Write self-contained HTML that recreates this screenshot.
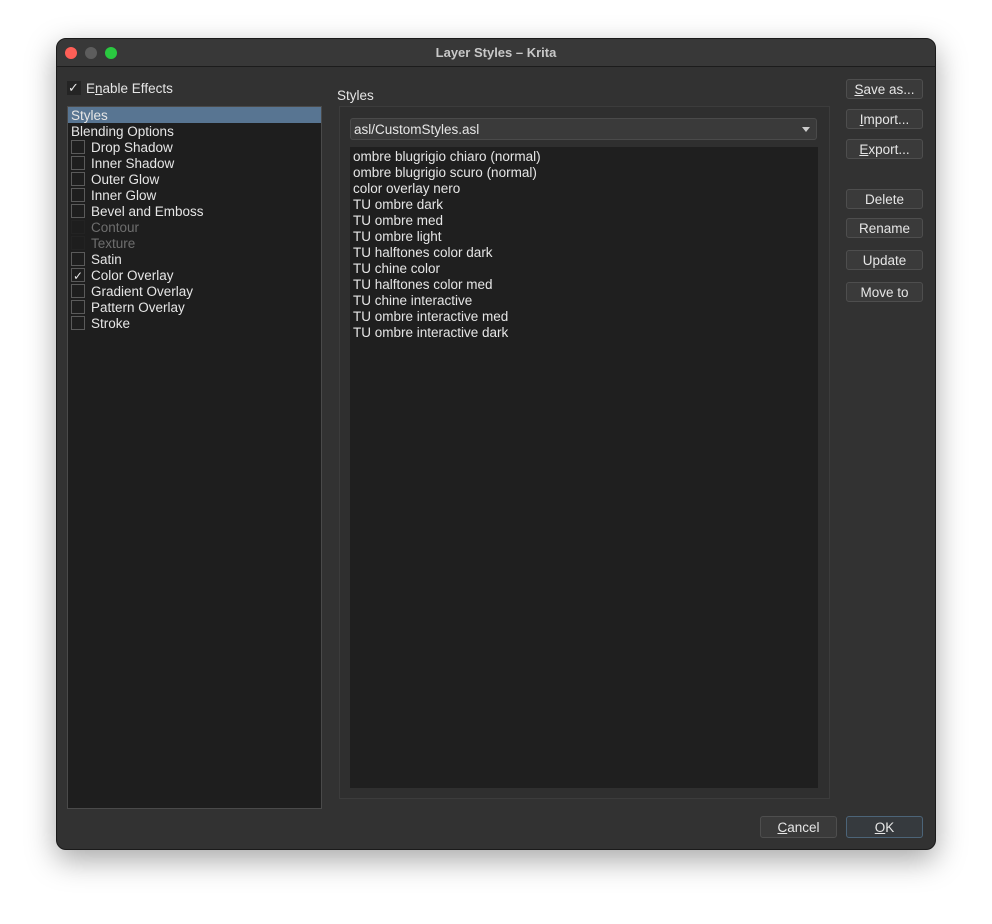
<!DOCTYPE html>
<html><head><meta charset="utf-8"><style>
*{box-sizing:border-box;margin:0;padding:0}
body{width:992px;height:924px;background:#fff;font-family:"Liberation Sans",sans-serif;font-size:13.5px;color:#e6e6e6;position:relative;overflow:hidden}
.win{position:absolute;left:56px;top:38px;width:880px;height:812px;background:#323232;border-radius:10px;box-shadow:0 10px 30px rgba(0,0,0,.35);border:1px solid #1a1a1a;overflow:hidden}
.title{position:absolute;left:0;top:0;width:100%;height:28px;background:#383838;border-bottom:1px solid #1c1c1c;text-align:center;line-height:27px;font-weight:bold;color:#c8c8c8;font-size:13px}
.dot{position:absolute;top:8px;width:12px;height:12px;border-radius:50%}
.a{position:absolute;white-space:nowrap}
.list{position:absolute;background:#1e1e1e;border:1px solid #4a4a4a}
.row{position:absolute;height:16px;line-height:18px;white-space:nowrap}
.cb{position:absolute;width:14px;height:14px;border:1px solid #5a5a5a;background:#1e1e1e;top:1px}
.btn{position:absolute;left:846px;width:77px;height:20px;background:#3a3a3a;border:1px solid #4e4e4e;border-radius:3px;text-align:center;line-height:20px;color:#e6e6e6}
u{text-decoration:underline}
</style></head><body>
<div class="win">
<div class="title">Layer Styles – Krita</div>
<div class="dot" style="left:8px;background:#fe5f57"></div>
<div class="dot" style="left:28px;background:#5d5d5d"></div>
<div class="dot" style="left:48px;background:#2ac840"></div>
</div>
<div class="cb" style="left:67px;top:81px;border:none;background:#242424"></div>
<div class="a" style="left:68px;top:80px;font-size:13px">✓</div>
<div class="a" style="left:86px;top:81px">E<u>n</u>able Effects</div>

<div class="list" style="left:67px;top:106px;width:255px;height:703px">
<div class="row" style="left:0;top:0;width:253px;background:#587592;padding-left:3px">Styles</div>
<div class="row" style="left:3px;top:16px">Blending Options</div>
<div class="cb" style="left:3px;top:33px"></div><div class="row" style="left:23px;top:32px">Drop Shadow</div>
<div class="cb" style="left:3px;top:49px"></div><div class="row" style="left:23px;top:48px">Inner Shadow</div>
<div class="cb" style="left:3px;top:65px"></div><div class="row" style="left:23px;top:64px">Outer Glow</div>
<div class="cb" style="left:3px;top:81px"></div><div class="row" style="left:23px;top:80px">Inner Glow</div>
<div class="cb" style="left:3px;top:97px"></div><div class="row" style="left:23px;top:96px">Bevel and Emboss</div>
<div class="cb" style="left:3px;top:113px;border-color:#232323"></div><div class="row" style="left:23px;top:112px;color:#6e6e6e">Contour</div>
<div class="cb" style="left:3px;top:129px;border-color:#232323"></div><div class="row" style="left:23px;top:128px;color:#6e6e6e">Texture</div>
<div class="cb" style="left:3px;top:145px"></div><div class="row" style="left:23px;top:144px">Satin</div>
<div class="cb" style="left:3px;top:161px"></div><div class="row" style="left:5px;top:160px;font-size:12px">✓</div><div class="row" style="left:23px;top:160px">Color Overlay</div>
<div class="cb" style="left:3px;top:177px"></div><div class="row" style="left:23px;top:176px">Gradient Overlay</div>
<div class="cb" style="left:3px;top:193px"></div><div class="row" style="left:23px;top:192px">Pattern Overlay</div>
<div class="cb" style="left:3px;top:209px"></div><div class="row" style="left:23px;top:208px">Stroke</div>
</div>

<div class="a" style="left:337px;top:88px">Styles</div>
<div style="position:absolute;left:339px;top:106px;width:491px;height:693px;border:1px solid #3c3c3c;background:#2f2f2f"></div>
<div style="position:absolute;left:350px;top:118px;width:467px;height:22px;background:#3a3a3a;border:1px solid #4a4a4a;border-radius:3px"></div>
<div class="a" style="left:354px;top:122px">asl/CustomStyles.asl</div>
<div style="position:absolute;left:802px;top:127px;width:0;height:0;border-left:4px solid transparent;border-right:4px solid transparent;border-top:5px solid #ccc"></div>
<div class="list" style="left:350px;top:147px;width:468px;height:641px;border:none;background:#1f1f1f">
<div class="row" style="left:3px;top:1px">ombre blugrigio chiaro (normal)</div>
<div class="row" style="left:3px;top:17px">ombre blugrigio scuro (normal)</div>
<div class="row" style="left:3px;top:33px">color overlay nero</div>
<div class="row" style="left:3px;top:49px">TU ombre dark</div>
<div class="row" style="left:3px;top:65px">TU ombre med</div>
<div class="row" style="left:3px;top:81px">TU ombre light</div>
<div class="row" style="left:3px;top:97px">TU halftones color dark</div>
<div class="row" style="left:3px;top:113px">TU chine color</div>
<div class="row" style="left:3px;top:129px">TU halftones color med</div>
<div class="row" style="left:3px;top:145px">TU chine interactive</div>
<div class="row" style="left:3px;top:161px">TU ombre interactive med</div>
<div class="row" style="left:3px;top:177px">TU ombre interactive dark</div>
</div>

<div class="btn" style="top:79px"><u>S</u>ave as...</div>
<div class="btn" style="top:109px"><u>I</u>mport...</div>
<div class="btn" style="top:139px"><u>E</u>xport...</div>
<div class="btn" style="top:189px">Delete</div>
<div class="btn" style="top:218px">Rename</div>
<div class="btn" style="top:250px">Update</div>
<div class="btn" style="top:282px">Move to</div>
<div class="btn" style="left:760px;top:816px;height:22px;line-height:22px"><u>C</u>ancel</div>
<div class="btn" style="top:816px;height:22px;line-height:22px;border-color:#4c6478;background:#363a3e"><u>O</u>K</div>
</body></html>
